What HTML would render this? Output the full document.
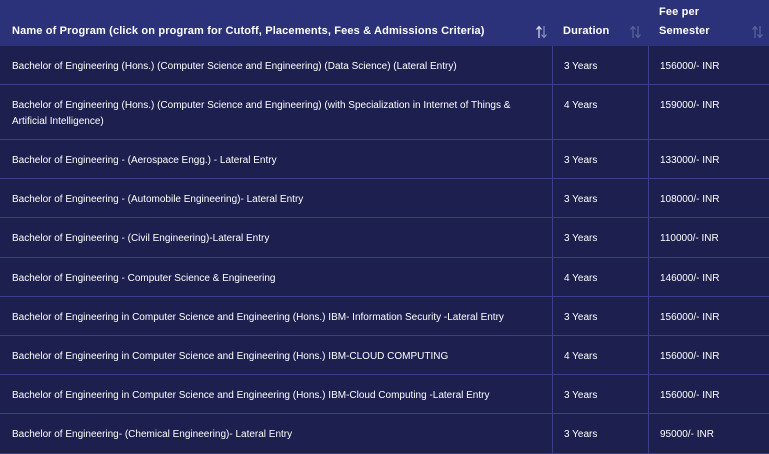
<!DOCTYPE html>
<html><head><meta charset="utf-8"><style>
html,body{margin:0;padding:0;background:#1d1f4f;width:769px;height:452px;overflow:hidden;font-family:"Liberation Sans",sans-serif;color:#fff}
.r{position:absolute;left:0;width:769px;border-bottom:1px solid #3a3f8a;box-sizing:border-box}
.c{position:absolute;top:0;bottom:0;font-size:10px;line-height:16px;display:flex;align-items:center;box-sizing:border-box;padding-top:3px}
.c1{left:0;width:552px;padding-left:12px;padding-right:20px}
.c2{left:552px;width:96px;border-left:1px solid #3a3f8a;padding-left:11px}
.c3{left:648px;width:121px;border-left:1px solid #3a3f8a;padding-left:11px}
.h{background:#2c327a;border-bottom:none}
.h .c{font-size:11px;font-weight:bold;letter-spacing:0.15px;border-left:none;align-items:flex-end;padding-bottom:5px;line-height:19px}
.s{position:absolute;top:25px}
.tall .c{align-items:flex-start;padding-top:13px}
</style></head><body>
<div class="r h" style="top:0;height:46px">
<div class="c c1">Name of Program (click on program for Cutoff, Placements, Fees &amp; Admissions Criteria)</div>
<svg class="s" style="left:536px" width="11" height="14" viewBox="0 0 11 14"><path d="M3 13V2M0.5 4.5L3 1.5L5.5 4.5" stroke="#e0e2f2" stroke-width="1.2" fill="none"/><path d="M8 1V12M5.5 9.5L8 12.5L10.5 9.5" stroke="#8a8fc0" stroke-width="1.2" fill="none"/></svg>
<div class="c c2">Duration</div>
<svg class="s" style="left:630px" width="11" height="14" viewBox="0 0 11 14"><path d="M3 13V2M0.5 4.5L3 1.5L5.5 4.5M8 1V12M5.5 9.5L8 12.5L10.5 9.5" stroke="#5d639e" stroke-width="1.2" fill="none"/></svg>
<div class="c c3">Fee per<br>Semester</div>
<svg class="s" style="left:752px" width="11" height="14" viewBox="0 0 11 14"><path d="M3 13V2M0.5 4.5L3 1.5L5.5 4.5M8 1V12M5.5 9.5L8 12.5L10.5 9.5" stroke="#5d639e" stroke-width="1.2" fill="none"/></svg>
</div>
<div class="r" style="top:46px;height:39px"><div class="c c1">Bachelor of Engineering (Hons.) (Computer Science and Engineering) (Data Science) (Lateral Entry)</div><div class="c c2">3 Years</div><div class="c c3">156000/- INR</div></div>
<div class="r tall" style="top:85px;height:55px"><div class="c c1">Bachelor of Engineering (Hons.) (Computer Science and Engineering) (with Specialization in Internet of Things &amp; Artificial Intelligence)</div><div class="c c2">4 Years</div><div class="c c3">159000/- INR</div></div>
<div class="r" style="top:140px;height:39px"><div class="c c1">Bachelor of Engineering - (Aerospace Engg.) - Lateral Entry</div><div class="c c2">3 Years</div><div class="c c3">133000/- INR</div></div>
<div class="r" style="top:179px;height:39px"><div class="c c1">Bachelor of Engineering - (Automobile Engineering)- Lateral Entry</div><div class="c c2">3 Years</div><div class="c c3">108000/- INR</div></div>
<div class="r" style="top:218px;height:40px"><div class="c c1">Bachelor of Engineering - (Civil Engineering)-Lateral Entry</div><div class="c c2">3 Years</div><div class="c c3">110000/- INR</div></div>
<div class="r" style="top:258px;height:39px"><div class="c c1">Bachelor of Engineering - Computer Science &amp; Engineering</div><div class="c c2">4 Years</div><div class="c c3">146000/- INR</div></div>
<div class="r" style="top:297px;height:39px"><div class="c c1">Bachelor of Engineering in Computer Science and Engineering (Hons.) IBM- Information Security -Lateral Entry</div><div class="c c2">3 Years</div><div class="c c3">156000/- INR</div></div>
<div class="r" style="top:336px;height:39px"><div class="c c1">Bachelor of Engineering in Computer Science and Engineering (Hons.) IBM-CLOUD COMPUTING</div><div class="c c2">4 Years</div><div class="c c3">156000/- INR</div></div>
<div class="r" style="top:375px;height:39px"><div class="c c1">Bachelor of Engineering in Computer Science and Engineering (Hons.) IBM-Cloud Computing -Lateral Entry</div><div class="c c2">3 Years</div><div class="c c3">156000/- INR</div></div>
<div class="r" style="top:414px;height:40px"><div class="c c1">Bachelor of Engineering- (Chemical Engineering)- Lateral Entry</div><div class="c c2">3 Years</div><div class="c c3">95000/- INR</div></div>
</body></html>
